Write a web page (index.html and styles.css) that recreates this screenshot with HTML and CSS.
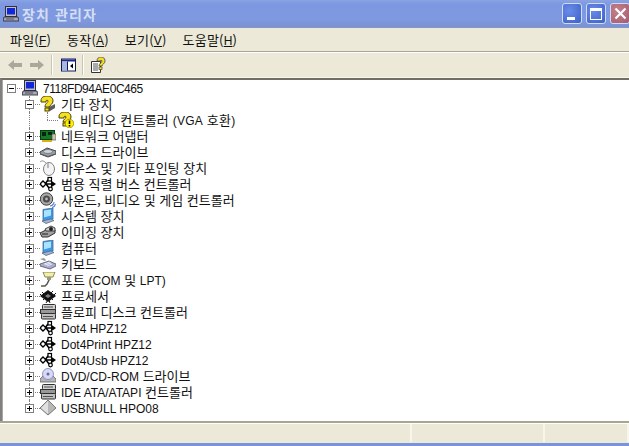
FILE: index.html
```html
<!DOCTYPE html>
<html lang="ko">
<head>
<meta charset="utf-8">
<title>장치 관리자</title>
<link rel="stylesheet" href="styles.css">
</head>
<body>
<svg class="defs" width="0" height="0">
  <defs>
    <symbol id="i-pc" viewBox="0 0 16 16"><rect x="2.500" y=".5" width="11" height="10" fill="#c0c0c8" stroke="#303040"/><rect x="4" y="2" width="8" height="6.500" fill="#1228d8"/><path d="M1 11h14l1 4H0z" fill="#a8a8b0" stroke="#303040" stroke-width=".9"/><path d="M3 13h8" stroke="#505060"/></symbol>
    <symbol id="i-q" viewBox="0 0 16 16"><path d="M9 11l6-3v4l-5 3H7z" fill="#5c5c5c"/><path d="M1 5C1 1 4 0 7 0c4 0 6 2 6 5 0 3-3 4-4 6H5c0-4 3-4 3-6 0-1-2-1-2 0v1H1z" fill="#f6e020" stroke="#4a4200"/><rect x="5" y="12" width="4" height="3" fill="#f6e020" stroke="#4a4200"/></symbol>
    <symbol id="i-qw" viewBox="0 0 16 16"><path d="M1 5C1 1 4 0 7 0c4 0 6 2 6 5 0 3-3 4-4 5H5c0-3 3-3 3-5 0-1-2-1-2 0v1H1z" fill="#f6e020" stroke="#4a4200"/><rect x="5" y="11" width="3" height="3" fill="#f6e020" stroke="#4a4200"/><circle cx="11.500" cy="11.500" r="4.300" fill="#fff000" stroke="#908000" stroke-width=".7"/><path d="M11.500 8.500v3.500M11.500 13v1.500" stroke="#000" stroke-width="1.600"/></symbol>
    <symbol id="i-net" viewBox="0 0 16 16"><rect x=".5" y="2.500" width="14" height="9" fill="#157a28" stroke="#083c10"/><rect x="2" y="4" width="4" height="4" fill="#062410"/><rect x="8" y="4" width="4" height="3" fill="#062410"/><rect x="2" y="12" width="10" height="2" fill="#dcb018"/><rect x="12" y="6" width="4" height="6" fill="#c8c8a8" stroke="#444" stroke-width=".6"/></symbol>
    <symbol id="i-disk" viewBox="0 0 16 16"><path d="M0 8l7-4 9 3v3l-8 3-8-3z" fill="#989ca4" stroke="#404448"/><ellipse cx="8" cy="7.500" rx="4.500" ry="2" fill="#d0d4dc" stroke="#606468" stroke-width=".7"/><path d="M1 10l7 2.500 7-2.500" stroke="#606468" fill="none"/></symbol>
    <symbol id="i-mouse" viewBox="0 0 16 16"><path d="M0 2c2-2 4-1 6 1" fill="none" stroke="#8a8a8a"/><ellipse cx="9" cy="9" rx="5.500" ry="6.500" fill="#f4f4f4" stroke="#808080"/><path d="M8 3v5" stroke="#999"/><ellipse cx="8" cy="6" rx="1.200" ry="2.200" fill="#b8b8c4"/></symbol>
    <symbol id="i-usb" viewBox="0 0 16 16"><path d="M3 8h10M5 8l3-4h2M6 8l3 4h1" fill="none" stroke="#000" stroke-width="1.600"/><path d="M0 8l3-3 3 3-3 3z" fill="#fff" stroke="#000" stroke-width="1.300"/><path d="M11 4.500L16 8l-5 3.500z" fill="#000"/><rect x="8" y="1.500" width="3.500" height="3.500" fill="#fff" stroke="#000" stroke-width="1.200"/><circle cx="10.500" cy="13" r="1.800" fill="#fff" stroke="#000" stroke-width="1.200"/></symbol>
    <symbol id="i-snd" viewBox="0 0 16 16"><circle cx="6.500" cy="7" r="6.200" fill="#a8a8a8" stroke="#404040"/><circle cx="6.500" cy="7" r="3.500" fill="#4c4c4c"/><circle cx="6.500" cy="7" r="1.400" fill="#b8b8b8"/><path d="M10 14c2 0 4-2 4-4M12 15.500c2 0 3-2 3.500-3.500" fill="none" stroke="#5080d0" stroke-width="1.100"/></symbol>
    <symbol id="i-sys" viewBox="0 0 16 16"><path d="M3 1.500L13 0v11l-10 2z" fill="#3898f0" stroke="#506888" stroke-width=".8"/><path d="M4 2.500L11 1.500v6l-7 2z" fill="#a8e4ff"/><path d="M2 13l9-2 3 1.500-8 3z" fill="#a8b4cc" stroke="#506888" stroke-width=".8"/></symbol>
    <symbol id="i-img" viewBox="0 0 16 16"><path d="M0 9l6-3h9v3l-7 4H2z" fill="#a0a0a0" stroke="#303030"/><path d="M5 5l6-3 4 2v3H6z" fill="#d0d0d0" stroke="#303030" stroke-width=".9"/><circle cx="11" cy="5" r="2" fill="#222"/><path d="M2 10h6" stroke="#222"/></symbol>
    <symbol id="i-kb" viewBox="0 0 16 16"><path d="M0 3l4-1 2 2-1 1z" fill="#999"/><path d="M0 8l9-3 7 3v2l-6 3-10-3z" fill="#a8accc" stroke="#556" stroke-width=".8"/><path d="M4 8l6-2M5 9l6-2M7 10l5-2" stroke="#eef" stroke-width=".9"/></symbol>
    <symbol id="i-port" viewBox="0 0 16 16"><path d="M9 5v3l-2 4-2 2H1" fill="none" stroke="#585848" stroke-width="1.500"/><path d="M3 0h12l-2 5H5z" fill="#f0f0a8" stroke="#787850" stroke-width=".9"/><rect x="7" y="5" width="4" height="3" fill="#98987a"/></symbol>
    <symbol id="i-cpu" viewBox="0 0 16 16"><path d="M0 8l8-6 8 6-8 6z" fill="#101010"/><path d="M0 6l3 3M2 4l3 3M13 3l-3 3M16 5l-3 3M3 12l2-2M6 15l2-3M10 15l-1-3M13 12l-2-2" stroke="#181818"/><path d="M5 8l3-2 3 2-3 2z" fill="#808080"/></symbol>
    <symbol id="i-ctl" viewBox="0 0 16 16"><rect x="2.500" y=".5" width="13" height="5" rx="1" fill="#d0d0d0" stroke="#303030"/><rect x=".5" y="5.500" width="15" height="4" fill="#989898" stroke="#303030"/><rect x="1.500" y="9.500" width="14" height="5.500" rx="1" fill="#c0c0c0" stroke="#303030"/><path d="M4 3h9M3 12.500h10" stroke="#505050"/></symbol>
    <symbol id="i-dvd" viewBox="0 0 16 16"><path d="M0 11l3-3h10l3 3v3H0z" fill="#b4b4b4" stroke="#606060" stroke-width=".8"/><circle cx="8" cy="6" r="5.500" fill="#d8d8f8" stroke="#8080b0" stroke-width=".8"/><circle cx="8" cy="6" r="1.500" fill="#6868a0"/></symbol>
    <symbol id="i-dia" viewBox="0 0 16 16"><path d="M8 0l8 8-8 7-8-7z" fill="#b8b8b8" stroke="#606060" stroke-width=".8"/><path d="M8 1L1 8l7 6z" fill="#e0e0e0"/></symbol>
    <symbol id="i-panel" viewBox="0 0 15 13"><rect x=".5" y=".5" width="14" height="12" fill="#fff" stroke="#101860"/><rect x="1" y="1" width="13" height="2" fill="#1a2a90"/><rect x="1" y="3" width="5" height="9" fill="#a8b8e0"/><path d="M6.500 3v9" stroke="#101860"/><path d="M12 5v5L9 7.500z" fill="#000"/></symbol>
    <symbol id="i-help" viewBox="0 0 15 16"><path d="M.5 4.500h9v11h-9z" fill="#fff" stroke="#333"/><path d="M2 7h5M2 9h5M2 11h5M2 13h5" stroke="#555"/><path d="M6 4c0-3 2-4 4-4s4 1 4 4-3 3-3 5H8c0-3 3-3 3-5 0-1-2-1-2 0z" fill="#f6e020" stroke="#444" stroke-width=".8"/><rect x="8" y="10" width="3" height="2.500" fill="#f6e020" stroke="#444" stroke-width=".7"/></symbol>
  </defs>
</svg>
<div class="window">
  <header class="titlebar">
    <svg class="ico"><use href="#i-pc"/></svg>
    <span class="title">장치 관리자</span>
    <div class="controls">
      <div class="wbtn"><span class="min"></span></div>
      <div class="wbtn"><span class="max"></span></div>
      <div class="wbtn close">
        <svg width="13" height="13" viewBox="0 0 13 13"><path d="M1.500 1.500l10 10M11.500 1.500l-10 10" stroke="#fff" stroke-width="2.200"/></svg>
      </div>
    </div>
  </header>
  <nav class="menubar">
    <span class="menu">파일(<u class="lat">F</u>)</span>
    <span class="menu">동작(<u class="lat">A</u>)</span>
    <span class="menu">보기(<u class="lat">V</u>)</span>
    <span class="menu">도움말(<u class="lat">H</u>)</span>
  </nav>
  <div class="toolbar">
    <svg class="tb-arrow" viewBox="0 0 14 12"><path d="M0 6l6-5v3h8v4H6v3z" fill="#aaa89c"/></svg>
    <svg class="tb-arrow" viewBox="0 0 14 12"><path d="M14 6L8 1v3H0v4h8v3z" fill="#aaa89c"/></svg>
    <span class="tb-sep"></span>
    <svg class="tb-ico"><use href="#i-panel"/></svg>
    <span class="tb-sep"></span>
    <svg class="tb-ico"><use href="#i-help"/></svg>
  </div>
  <main class="tree">
    <div class="row"><span class="tw first"><b class="box minus"></b></span><svg class="ico"><use href="#i-pc"/></svg><span class="lbl"><span class="lat tight">7118FD94AE0C465</span></span></div>
    <div class="row l1"><span class="tw"><b class="box minus"></b></span><svg class="ico"><use href="#i-q"/></svg><span class="lbl">기타 장치</span></div>
    <div class="row l1"><span class="tw2"></span><span class="tw end"></span><svg class="ico"><use href="#i-qw"/></svg><span class="lbl wide">비디오 컨트롤러 <span class="lat">(VGA</span> 호환<span class="lat">)</span></span></div>
    <div class="row l1"><span class="tw"><b class="box"></b></span><svg class="ico"><use href="#i-net"/></svg><span class="lbl">네트워크 어댑터</span></div>
    <div class="row l1"><span class="tw"><b class="box"></b></span><svg class="ico"><use href="#i-disk"/></svg><span class="lbl">디스크 드라이브</span></div>
    <div class="row l1"><span class="tw"><b class="box"></b></span><svg class="ico"><use href="#i-mouse"/></svg><span class="lbl">마우스 및 기타 포인팅 장치</span></div>
    <div class="row l1"><span class="tw"><b class="box"></b></span><svg class="ico"><use href="#i-usb"/></svg><span class="lbl">범용 직렬 버스 컨트롤러</span></div>
    <div class="row l1"><span class="tw"><b class="box"></b></span><svg class="ico"><use href="#i-snd"/></svg><span class="lbl">사운드, 비디오 및 게임 컨트롤러</span></div>
    <div class="row l1"><span class="tw"><b class="box"></b></span><svg class="ico"><use href="#i-sys"/></svg><span class="lbl">시스템 장치</span></div>
    <div class="row l1"><span class="tw"><b class="box"></b></span><svg class="ico"><use href="#i-img"/></svg><span class="lbl">이미징 장치</span></div>
    <div class="row l1"><span class="tw"><b class="box"></b></span><svg class="ico"><use href="#i-sys"/></svg><span class="lbl">컴퓨터</span></div>
    <div class="row l1"><span class="tw"><b class="box"></b></span><svg class="ico"><use href="#i-kb"/></svg><span class="lbl">키보드</span></div>
    <div class="row l1"><span class="tw"><b class="box"></b></span><svg class="ico"><use href="#i-port"/></svg><span class="lbl">포트 <span class="lat">(COM</span> 및 <span class="lat">LPT)</span></span></div>
    <div class="row l1"><span class="tw"><b class="box"></b></span><svg class="ico"><use href="#i-cpu"/></svg><span class="lbl">프로세서</span></div>
    <div class="row l1"><span class="tw"><b class="box"></b></span><svg class="ico"><use href="#i-ctl"/></svg><span class="lbl">플로피 디스크 컨트롤러</span></div>
    <div class="row l1"><span class="tw"><b class="box"></b></span><svg class="ico"><use href="#i-usb"/></svg><span class="lbl"><span class="lat">Dot4 HPZ12</span></span></div>
    <div class="row l1"><span class="tw"><b class="box"></b></span><svg class="ico"><use href="#i-usb"/></svg><span class="lbl"><span class="lat">Dot4Print HPZ12</span></span></div>
    <div class="row l1"><span class="tw"><b class="box"></b></span><svg class="ico"><use href="#i-usb"/></svg><span class="lbl"><span class="lat">Dot4Usb HPZ12</span></span></div>
    <div class="row l1"><span class="tw"><b class="box"></b></span><svg class="ico"><use href="#i-dvd"/></svg><span class="lbl"><span class="lat">DVD/CD-ROM</span> 드라이브</span></div>
    <div class="row l1"><span class="tw"><b class="box"></b></span><svg class="ico"><use href="#i-ctl"/></svg><span class="lbl"><span class="lat">IDE ATA/ATAPI</span> 컨트롤러</span></div>
    <div class="row l1"><span class="tw end"><b class="box"></b></span><svg class="ico"><use href="#i-dia"/></svg><span class="lbl"><span class="lat">USBNULL HPO08</span></span></div>
  </main>
  <footer class="statusbar">
    <span class="cell grow"></span>
    <span class="cell mid"></span>
    <span class="cell last"></span>
  </footer>
</div>
</body>
</html>
```
FILE: styles.css
```css
* { box-sizing: border-box; }
html, body { margin: 0; height: 100%; overflow: hidden; }
body { font-family: "Noto Sans CJK KR", sans-serif; color: #111; background: #ece9d8; }
.defs { position: absolute; }
.window { height: 446px; display: flex; flex-direction: column; border-bottom: 3px solid #7a94dc; }
.ico { width: 16px; height: 16px; flex: none; display: block; }
.tb-ico { width: 15px; height: 16px; flex: none; display: block; }
.lat { font-family: "Liberation Sans", sans-serif; font-size: 12px; }
.tight { letter-spacing: -.45px; }

.titlebar { height: 28px; flex: none; display: flex; align-items: center; padding-left: 3px;
  background: linear-gradient(#8aa3e0 0, #7d98e2 4px, #7e99de 20px, #7a93d4 26px, #8b97c4 28px); }
.title { margin-left: 3px; font-size: 14px; font-weight: 700; letter-spacing: 1.1px; color: #d4def4; }
.controls { margin-left: auto; display: flex; gap: 4px; align-self: flex-start; padding-top: 3px; margin-right: -1px; }
.wbtn { width: 20px; height: 21px; border: 1px solid #d0dcf4; border-radius: 3px; background: radial-gradient(circle at 35% 35%, #6a8ce8, #3c60c8); display: flex; position: relative; align-items: center; justify-content: center; }
.wbtn.close { background: radial-gradient(circle at 35% 35%, #c48088, #a45c70); }
.min { width: 8px; height: 3px; background: #fff; position: absolute; left: 4px; bottom: 3px; }
.max { width: 12px; height: 12px; border: 1px solid #fff; border-top-width: 3px; }

.menubar { height: 24px; flex: none; display: flex; align-items: center; padding-left: 10px; gap: 16px; border-bottom: 1px solid #a8a590; font-size: 13px; }
.menu { white-space: nowrap; letter-spacing: .2px; }
.toolbar { height: 26px; flex: none; display: flex; align-items: center; padding: 0 0 2px 8px; border-top: 1px solid #fff; box-shadow: inset 0 -1px 0 #f8f6ec; }
.tb-arrow { width: 14px; height: 12px; flex: none; margin-right: 8px; }
.tb-sep { width: 2px; height: 20px; flex: none; background: linear-gradient(to right, #c8c5b2 1px, #fff 1px); margin: 0 8px 0 -1px; }
.tb-ico + .tb-sep { margin: 0 7px 0 6px; }

.tree { flex: 1; min-height: 0; background: #fff; border-top: 2px solid #716f64; border-left: 2px solid #808080; box-shadow: inset 1px 0 0 #aca899; overflow: hidden; }
.row { height: 16px; display: flex; align-items: center; }
.l1 { padding-left: 18px; }
.lbl { margin-left: 5px; font-size: 13px; white-space: nowrap; line-height: 16px; }
.lbl.wide { margin-left: 6px; letter-spacing: .2px; }

.tw, .tw2 { width: 18px; height: 16px; flex: none; position: relative; display: block; }
.tw { margin-right: 2px; }
.tw::before { content: ""; position: absolute; left: 9px; top: 0; bottom: 0; border-left: 1px dotted #808080; }
.tw::after { content: ""; position: absolute; left: 9px; right: -2px; top: 8px; border-top: 1px dotted #808080; }
.tw.first::before { display: none; }
.tw.end::before { bottom: 8px; }
.tw2::before { content: ""; position: absolute; left: 9px; top: 0; bottom: 0; border-left: 1px dotted #808080; }
.box { position: absolute; z-index: 1; left: 5px; top: 4px; width: 9px; height: 9px; background: #fff; border: 1px solid #808080; }
.box::before { content: ""; position: absolute; left: 1px; top: 3px; width: 5px; height: 1px; background: #000; }
.box::after { content: ""; position: absolute; left: 3px; top: 1px; width: 1px; height: 5px; background: #000; }
.box.minus::after { display: none; }

.statusbar { height: 22px; flex: none; display: flex; border-top: 2px solid #a8a590; box-shadow: inset 0 1px 0 #fff; }
.cell { border-right: 2px solid #f8f6ec; height: 18px; margin-top: 1px; }
.grow { width: 412px; }
.mid { width: 133px; }
.last { width: 84px; }
```
